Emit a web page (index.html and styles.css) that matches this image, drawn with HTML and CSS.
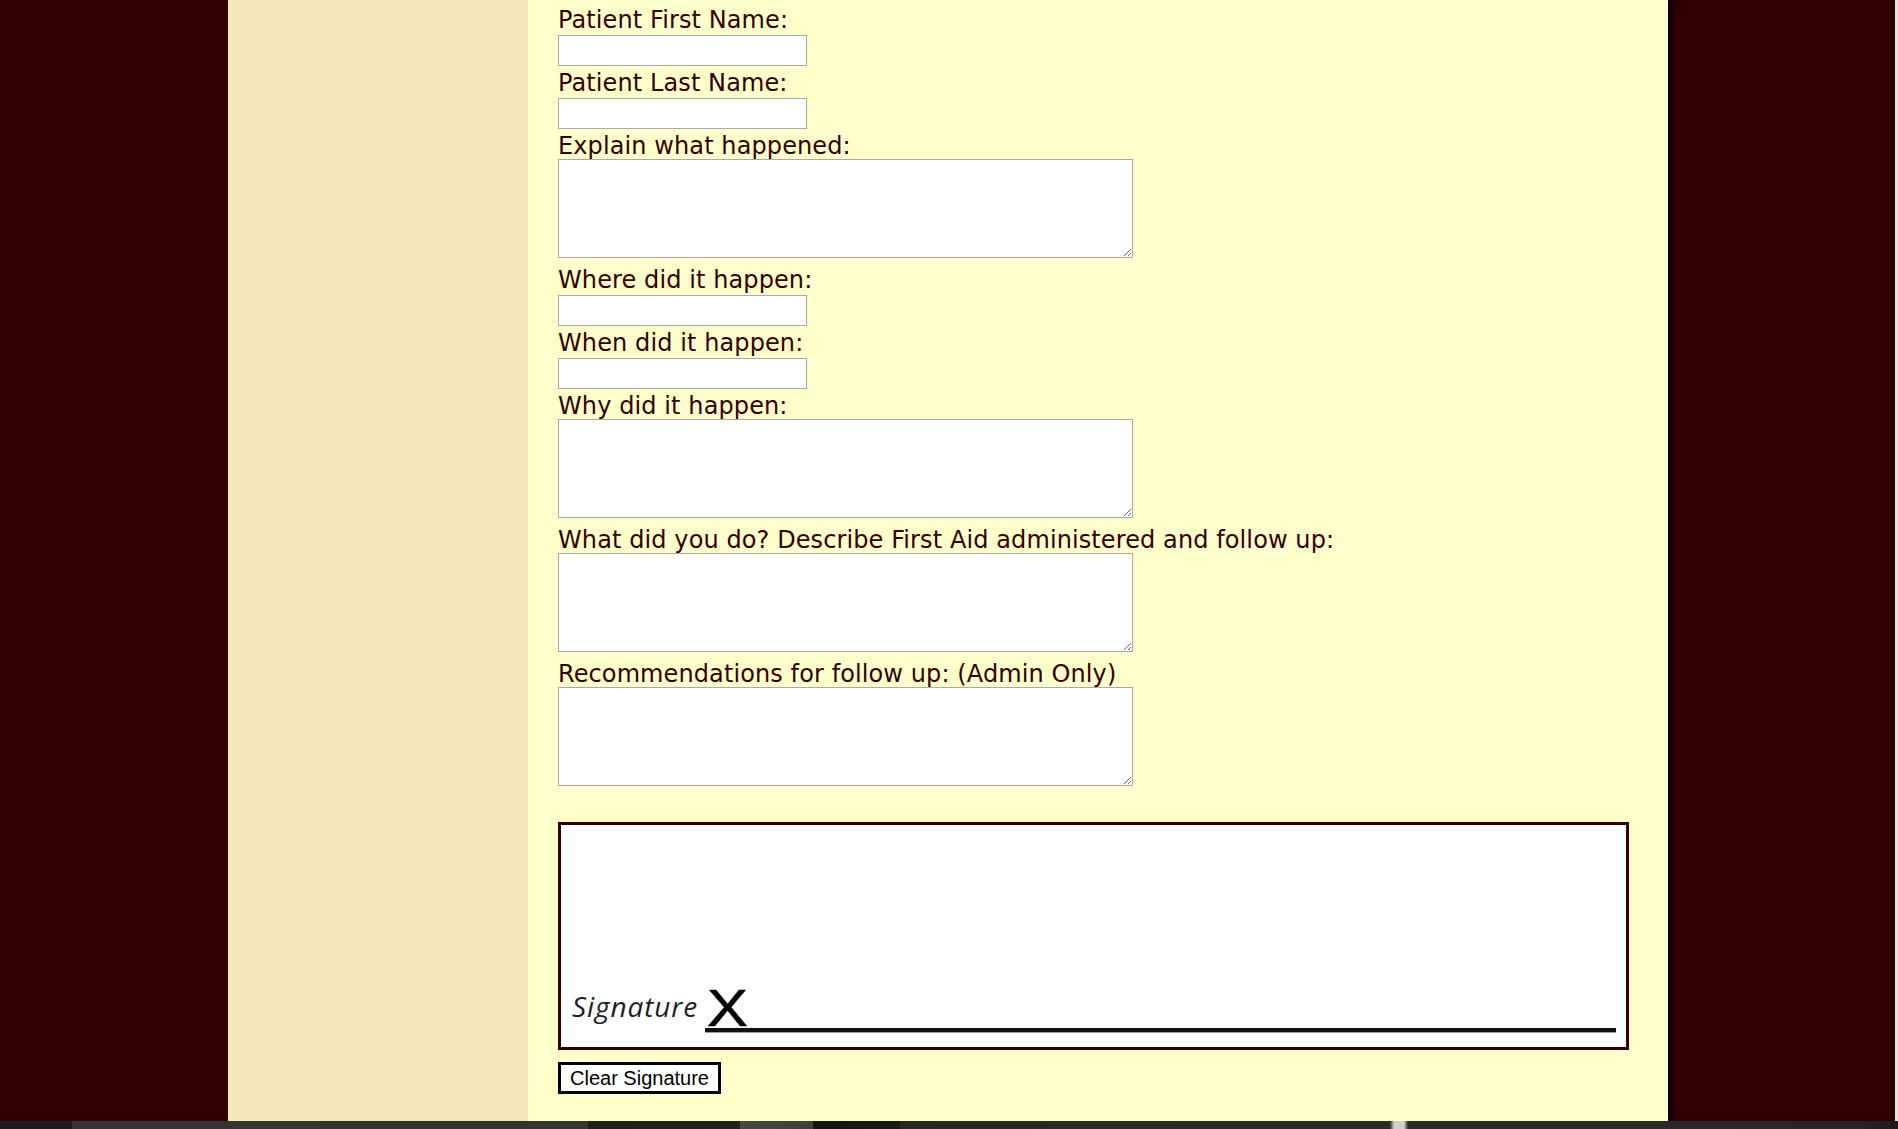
FILE: index.html
```html
<!DOCTYPE html>
<html lang="en">
<head>
<meta charset="utf-8">
<title>Incident Report</title>
<link rel="stylesheet" href="styles.css">
</head>
<body>
<div class="stage">
  <div class="page">
    <aside class="sidebar"></aside>
    <main class="main">
      <form class="form">
        <label class="lbl" for="first">Patient First Name:</label>
        <input class="field" id="first" type="text">
        <label class="lbl" for="last">Patient Last Name:</label>
        <input class="field" id="last" type="text">
        <label class="lbl" for="what">Explain what happened:</label>
        <textarea class="area" id="what"></textarea>
        <label class="lbl" for="where">Where did it happen:</label>
        <input class="field" id="where" type="text">
        <label class="lbl" for="when">When did it happen:</label>
        <input class="field" id="when" type="text">
        <label class="lbl" for="why">Why did it happen:</label>
        <textarea class="area" id="why"></textarea>
        <label class="lbl" for="aid">What did you do? Describe First Aid administered and follow up:</label>
        <textarea class="area" id="aid"></textarea>
        <label class="lbl" for="rec">Recommendations for follow up: (Admin Only)</label>
        <textarea class="area" id="rec"></textarea>
        <div class="sigpad">
          <div class="sig-row">
            <span class="sig-label">Signature</span>
            <div class="sig-field"><span class="sig-x">X</span></div>
          </div>
        </div>
        <button class="clear-btn" type="button">Clear Signature</button>
      </form>
    </main>
  </div>
</div>
<div class="footer-strip"></div>
</body>
</html>
```

FILE: styles.css
```css
html, body {
  margin: 0;
  padding: 0;
}

body {
  background: #330000;
  overflow: hidden;
}

.stage {
  height: 1121px;
  overflow: hidden;
  background: #330000;
  box-shadow: inset -3px 0 0 #e4e4e4;
}

.page {
  width: 1440px;
  height: 100%;
  margin-left: 228px;
  display: flex;
  box-shadow: 5px 0 6px -1px #000;
}

.sidebar {
  width: 300px;
  flex: none;
  background: #f5e7bb;
}

.main {
  width: 1140px;
  flex: none;
  box-sizing: border-box;
  padding: 6px 0 26px 30px;
  background: #ffffcc;
}

.form {
  display: flex;
  flex-direction: column;
  align-items: flex-start;
  margin: 0;
}

.lbl {
  display: block;
  font-family: "DejaVu Sans", Verdana, sans-serif;
  font-size: 24px;
  line-height: 28px;
  letter-spacing: 0.1px;
  color: #330000;
  white-space: nowrap;
}

.field {
  display: block;
  width: 249px;
  height: 31px;
  box-sizing: border-box;
  margin: 1px 0 3px;
  padding: 0 4px;
  border: 1px solid #a9a9a9;
  border-radius: 0;
  background: #fff;
  font: 20px "DejaVu Sans", sans-serif;
}

.area {
  display: block;
  width: 575px;
  height: 99px;
  box-sizing: border-box;
  margin: -1px 0 8px;
  padding: 2px;
  border: 1px solid #a9a9a9;
  border-radius: 0;
  background: #fff;
  resize: both;
  font: 20px "DejaVu Sans", sans-serif;
}

.sigpad {
  width: 1071px;
  height: 228px;
  box-sizing: border-box;
  margin-top: 28px;
  padding: 0 10px 15px 11px;
  border: 3px solid #330000;
  background: #fff;
  display: flex;
  flex-direction: column;
  justify-content: flex-end;
}

.sig-row {
  display: flex;
  align-items: flex-end;
}

.sig-label {
  font-family: "Open Sans", "Noto Sans", sans-serif;
  font-style: italic;
  font-size: 28px;
  line-height: 28px;
  letter-spacing: 0.9px;
  color: #1e1e28;
  margin-bottom: 12px;
}

.sig-field {
  flex: 1;
  margin-left: 7px;
  border-bottom: 4px solid #111;
  box-shadow: 0 1px 0 #9a9a9a;
}

.sig-x {
  display: block;
  width: 40px;
  margin-left: 2px;
  font-family: "Liberation Sans", Arial, sans-serif;
  font-size: 52px;
  line-height: 40px;
  color: #000;
  -webkit-text-stroke: 0.6px #000;
  transform: scaleX(1.18);
  transform-origin: left center;
}

.clear-btn {
  display: block;
  height: 32px;
  box-sizing: border-box;
  margin-top: 12px;
  padding: 1px 9px;
  border: 3px solid #000;
  border-radius: 0;
  background: #fff;
  color: #000;
  font-family: "Liberation Sans", Arial, sans-serif;
  font-size: 20px;
  line-height: 23px;
}

.footer-strip {
  height: 8px;
  background: linear-gradient(to right,
    #1c1c1c 0, #1c1c1c 72px,
    #333333 72px, #343434 588px,
    #1e1e1e 588px, #222 740px,
    #464646 740px, #404040 813px,
    #151515 813px, #181818 900px,
    #262626 900px, #2a2a2a 1390px,
    #cfcfcf 1394px, #cfcfcf 1404px,
    #2a2a2a 1408px, #262626 1860px,
    #1a1a1a 1898px);
}
```
